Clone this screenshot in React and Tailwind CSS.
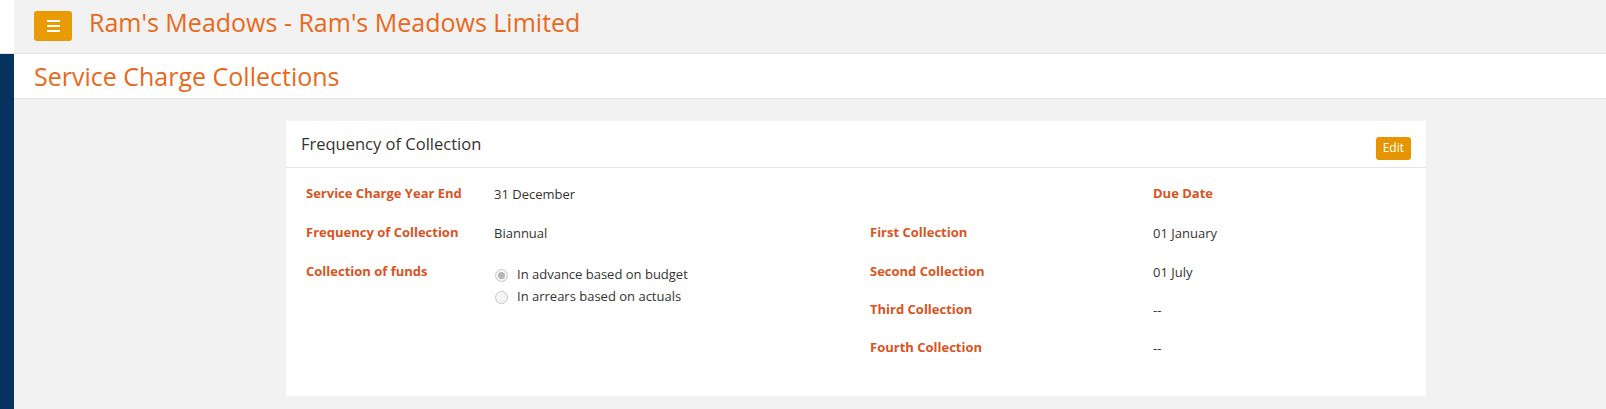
const font = { fontFamily: '"Open Sans", "Liberation Sans", sans-serif' };

function Label({ children }) {
  return <div className="text-[13px] font-bold text-[#d9541e]">{children}</div>;
}

function Value({ children }) {
  return <div className="text-[13px] text-[#333] pt-[1px]">{children}</div>;
}

function Radio({ checked, label }) {
  return (
    <div className="flex items-center h-[22px]">
      <span className="w-[13px] h-[13px] rounded-full border border-[#c8c8c8] bg-[#f4f4f4] flex items-center justify-center">
        {checked && <span className="w-[7px] h-[7px] rounded-full bg-[#b5b5b5]" />}
      </span>
      <span className="ml-[9px] text-[13px] text-[#333]">{label}</span>
    </div>
  );
}

export default function App() {
  return (
    <div className="min-h-[409px] bg-[#f2f2f2]" style={font}>
      <div className="flex h-[54px] border-b border-[#e3e3e3]">
        <div className="w-[14px] bg-white" />
        <div className="flex items-center pl-[20px]">
          <button className="w-[38px] h-[30px] rounded-[3px] bg-[#e89b02] flex flex-col items-center justify-center gap-[3px] -mt-[1px]">
            <span className="block w-[13px] h-[2px] bg-white" />
            <span className="block w-[13px] h-[2px] bg-white" />
            <span className="block w-[13px] h-[2px] bg-white" />
          </button>
          <h1 className="ml-[17px] text-[25px] text-[#e8691b] leading-none -mt-[8px]">Ram's Meadows - Ram's Meadows Limited</h1>
        </div>
      </div>
      <div className="flex min-h-[355px]">
        <div className="w-[14px] bg-[#06325f] shrink-0" />
        <div className="flex-1">
          <div className="h-[45px] bg-white border-b border-[#e3e3e3] flex items-center pl-[20px]">
            <h2 className="text-[25px] text-[#e8691b] leading-none">Service Charge Collections</h2>
          </div>
          <div className="pt-[22px] pl-[272px]">
            <div className="w-[1140px] bg-white">
              <div className="h-[47px] border-b border-[#e3e5e8] flex items-center justify-between pl-[15px] pr-[15px]">
                <div className="text-[16.5px] text-[#333] mt-[1px]">Frequency of Collection</div>
                <button className="h-[23px] px-[7px] rounded-[3px] bg-[#e69500] text-white text-[12px] mt-[8px]">Edit</button>
              </div>
              <div className="flex pl-[20px] pt-[16px] pb-[37px]">
                <div className="w-[564px] flex flex-col">
                  <div className="flex h-[39px]">
                    <div className="w-[188px]"><Label>Service Charge Year End</Label></div>
                    <Value>31 December</Value>
                  </div>
                  <div className="flex h-[39px]">
                    <div className="w-[188px]"><Label>Frequency of Collection</Label></div>
                    <Value>Biannual</Value>
                  </div>
                  <div className="flex">
                    <div className="w-[188px]"><Label>Collection of funds</Label></div>
                    <div className="flex flex-col mt-[2px] ml-[1px]">
                      <Radio checked label="In advance based on budget" />
                      <Radio label="In arrears based on actuals" />
                    </div>
                  </div>
                </div>
                <div className="flex-1 flex flex-col">
                  <div className="flex h-[39px]">
                    <div className="w-[283px]" />
                    <Label>Due Date</Label>
                  </div>
                  <div className="flex h-[39px]">
                    <div className="w-[283px]"><Label>First Collection</Label></div>
                    <Value>01 January</Value>
                  </div>
                  <div className="flex h-[38px]">
                    <div className="w-[283px]"><Label>Second Collection</Label></div>
                    <Value>01 July</Value>
                  </div>
                  <div className="flex h-[38px]">
                    <div className="w-[283px]"><Label>Third Collection</Label></div>
                    <Value>--</Value>
                  </div>
                  <div className="flex">
                    <div className="w-[283px]"><Label>Fourth Collection</Label></div>
                    <Value>--</Value>
                  </div>
                </div>
              </div>
            </div>
          </div>
        </div>
      </div>
    </div>
  );
}
